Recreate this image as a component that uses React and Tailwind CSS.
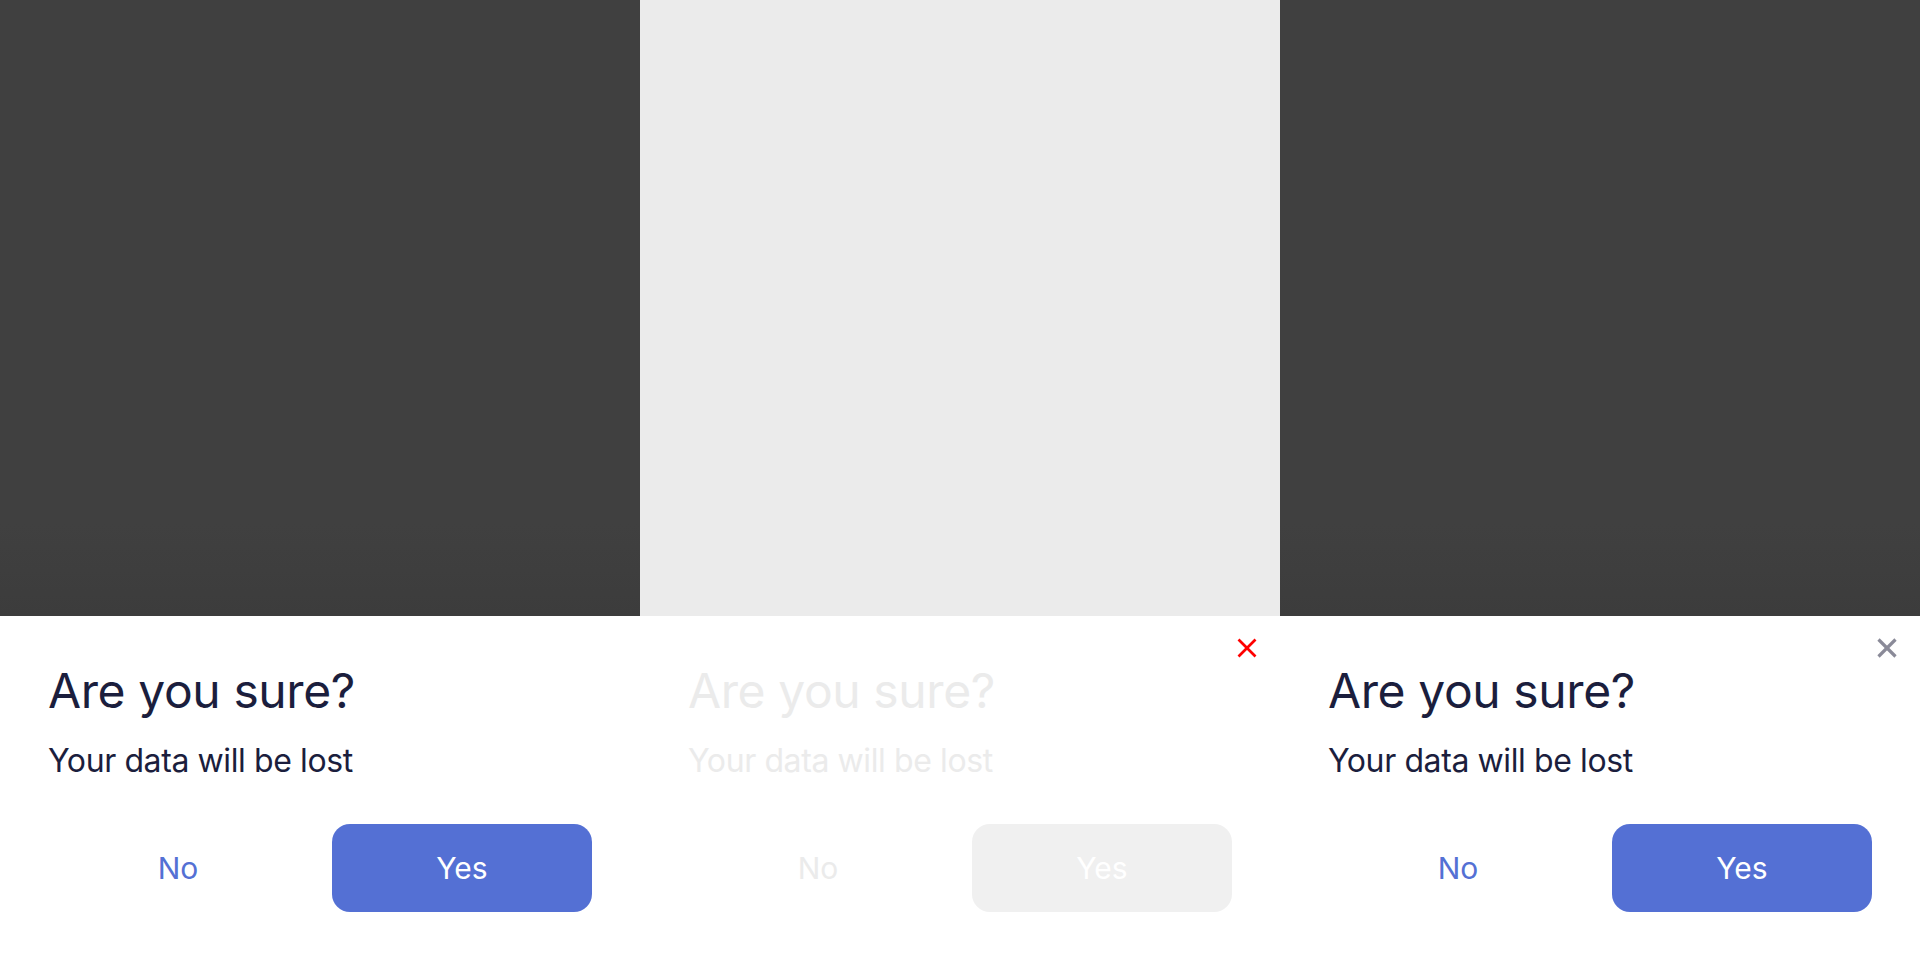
import { useState } from 'react'

function CloseIcon({ color, width }) {
  return (
    <svg viewBox="0 0 20 20" className="w-5 h-5" fill="none" stroke={color} strokeWidth={width} strokeLinecap="butt">
      <line x1="1.5" y1="1.5" x2="18.5" y2="18.5" />
      <line x1="18.5" y1="1.5" x2="1.5" y2="18.5" />
    </svg>
  )
}

function Sheet({ variant }) {
  const faded = variant === 'faded'
  return (
    <div className="relative h-[344px] bg-white px-12 pt-[51px]">
      {variant === 'faded' && (
        <button className="absolute top-[22px] right-[23px]">
          <CloseIcon color="#ff0000" width={2.6} />
        </button>
      )}
      {variant === 'close' && (
        <button className="absolute top-[22px] right-[23px]">
          <CloseIcon color="#8a8a98" width={3.2} />
        </button>
      )}

      <h2 className={`text-[48px] leading-[48px] font-normal tracking-[-0.4px] ${faded ? 'text-[#ebebeb]' : 'text-[#1b1e3d]'}`}>
        Are you sure?
      </h2>
      <p className={`mt-[30px] text-[32px] leading-[32px] tracking-[-0.4px] ${faded ? 'text-[#ebebeb]' : 'text-[#1b1e3d]'}`}>
        Your data will be lost
      </p>

      <div className="mt-[47px] flex gap-6">
        <button className={`flex-1 h-[88px] rounded-2xl text-[30px] ${faded ? 'text-[#ebebeb]' : 'text-[#5470d4]'}`}>
          No
        </button>
        <button className={`flex-1 h-[88px] rounded-[18px] text-[30px] text-white ${faded ? 'bg-[#f0f0f0]' : 'bg-[#5470d4]'}`}>
          Yes
        </button>
      </div>
    </div>
  )
}

export default function App() {
  const [screens] = useState(['plain', 'faded', 'close'])

  return (
    <div className="flex h-screen w-full font-['Inter',sans-serif]">
      {screens.map((v) => (
        <div key={v} className="flex w-1/3 flex-col">
          <div className={`flex-1 ${v === 'faded' ? 'bg-[#ebebeb]' : 'bg-gradient-to-b from-[#404040] from-85% to-[#3c3c3c]'}`} />
          <Sheet variant={v} />
        </div>
      ))}
    </div>
  )
}
